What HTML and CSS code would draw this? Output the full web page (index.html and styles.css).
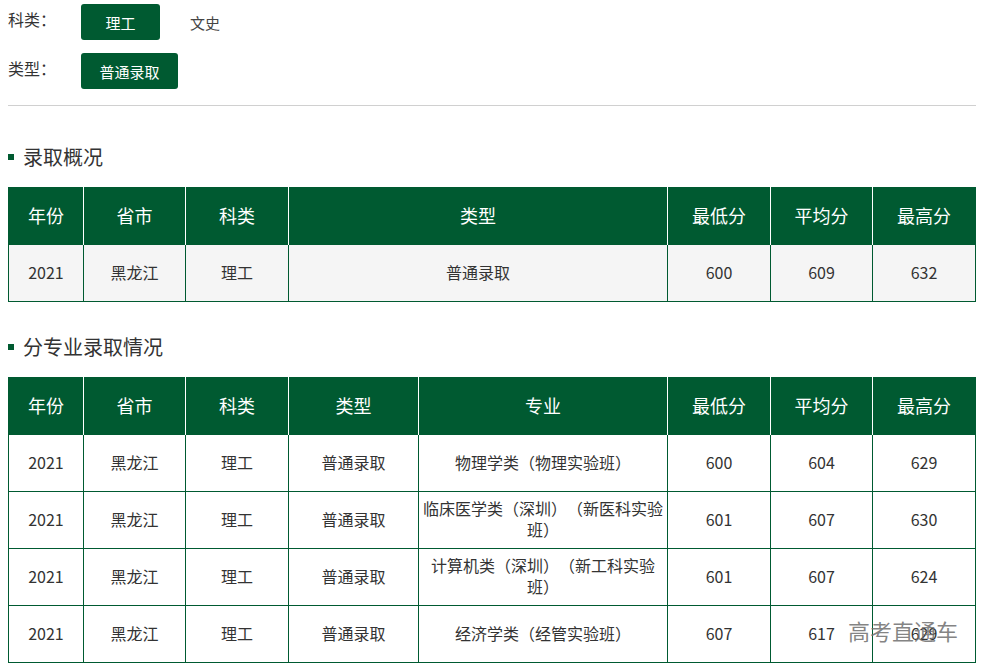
FILE: index.html
```html
<!DOCTYPE html>
<html lang="zh-CN">
<head>
<meta charset="utf-8">
<link rel="stylesheet" href="styles.css">
</head>
<body>
<div class="page">
  <div class="filters">
    <div class="filter-row">
      <span class="label">科类：</span>
      <span class="opt active">理工</span>
      <span class="opt">文史</span>
    </div>
    <div class="filter-row">
      <span class="label">类型：</span>
      <span class="opt active wide">普通录取</span>
    </div>
  </div>
  <div class="divider"></div>

  <h2 class="sec-title"><span class="dot"></span>录取概况</h2>
  <table class="data t1">
    <colgroup>
      <col style="width:75px"><col style="width:102px"><col style="width:103px"><col><col style="width:103px"><col style="width:102px"><col style="width:103px">
    </colgroup>
    <thead>
      <tr><th>年份</th><th>省市</th><th>科类</th><th>类型</th><th>最低分</th><th>平均分</th><th>最高分</th></tr>
    </thead>
    <tbody>
      <tr class="grey"><td>2021</td><td>黑龙江</td><td>理工</td><td>普通录取</td><td>600</td><td>609</td><td>632</td></tr>
    </tbody>
  </table>

  <h2 class="sec-title second"><span class="dot"></span>分专业录取情况</h2>
  <div class="tbl-wrap">
  <table class="data t2">
    <colgroup>
      <col style="width:75px"><col style="width:102px"><col style="width:103px"><col style="width:130px"><col><col style="width:103px"><col style="width:102px"><col style="width:103px">
    </colgroup>
    <thead>
      <tr><th>年份</th><th>省市</th><th>科类</th><th>类型</th><th>专业</th><th>最低分</th><th>平均分</th><th>最高分</th></tr>
    </thead>
    <tbody>
      <tr><td>2021</td><td>黑龙江</td><td>理工</td><td>普通录取</td><td class="major">物理学类（物理实验班）</td><td>600</td><td>604</td><td>629</td></tr>
      <tr><td>2021</td><td>黑龙江</td><td>理工</td><td>普通录取</td><td class="major">临床医学类（深圳）（新医科实验班）</td><td>601</td><td>607</td><td>630</td></tr>
      <tr><td>2021</td><td>黑龙江</td><td>理工</td><td>普通录取</td><td class="major">计算机类（深圳）（新工科实验班）</td><td>601</td><td>607</td><td>624</td></tr>
      <tr><td>2021</td><td>黑龙江</td><td>理工</td><td>普通录取</td><td class="major">经济学类（经管实验班）</td><td>607</td><td>617</td><td>629</td></tr>
    </tbody>
  </table>
  <div class="watermark">高考直通车</div>
  </div>
</div>
</body>
</html>
```

FILE: styles.css
```css
html, body {
  margin: 0;
  padding: 0;
  background: #fff;
}
body {
  font-family: "Noto Sans CJK SC", "Microsoft YaHei", sans-serif;
  color: #333;
  text-spacing-trim: space-all;
}
.page {
  padding: 4px 9px 0 8px;
}
.filters {
  display: flex;
  flex-direction: column;
  gap: 13px;
}
.filter-row {
  display: flex;
  align-items: flex-start;
  height: 36px;
}
.label {
  font-size: 16px;
  line-height: 30px;
  width: 73px;
  color: #333;
}
.opt {
  display: inline-flex;
  align-items: center;
  justify-content: center;
  height: 36px;
  min-width: 79px;
  padding: 0 6px;
  box-sizing: border-box;
  font-size: 15px;
  color: #444;
  border-radius: 3px;
}
.opt.active {
  background: #005a31;
  color: #fff;
}
.opt.wide {
  min-width: 97px;
}
.opt + .opt {
  margin-left: 14px;
  min-width: 62px;
}
.divider {
  height: 1px;
  background: #d0d0d0;
  margin-top: 16px;
}
.sec-title {
  display: flex;
  align-items: center;
  margin: 35px 0 16px 0;
  height: 30px;
  font-size: 20px;
  font-weight: normal;
  color: #333;
}
.sec-title.second {
  margin-top: 29px;
}
.dot {
  width: 6px;
  height: 6px;
  background: #005a31;
  margin-right: 9px;
  margin-top: 1px;
}
.tbl-wrap {
  position: relative;
}
table.data {
  width: 968px;
  border-collapse: collapse;
  table-layout: fixed;
  border: 1px solid #005a31;
}
.data th {
  background: #005a31;
  color: #fff;
  font-size: 18px;
  font-weight: normal;
  height: 54px;
  padding: 0 0 2px 0;
  border-left: 1px solid #fff;
  border-right: 1px solid #fff;
  border-top: 1px solid #005a31;
}
.data th:first-child {
  border-left-color: #005a31;
}
.data th:last-child {
  border-right-color: #005a31;
}
.data td {
  height: 54px;
  padding: 0 4px 2px 4px;
  text-align: center;
  font-size: 16px;
  line-height: 21px;
  color: #333;
  border: 1px solid #005a31;
}
.data tr.grey td {
  background: #f5f5f5;
}
.watermark {
  position: absolute;
  right: 18px;
  bottom: 17px;
  font-size: 22px;
  color: rgba(110, 110, 110, 0.85);
}
```
